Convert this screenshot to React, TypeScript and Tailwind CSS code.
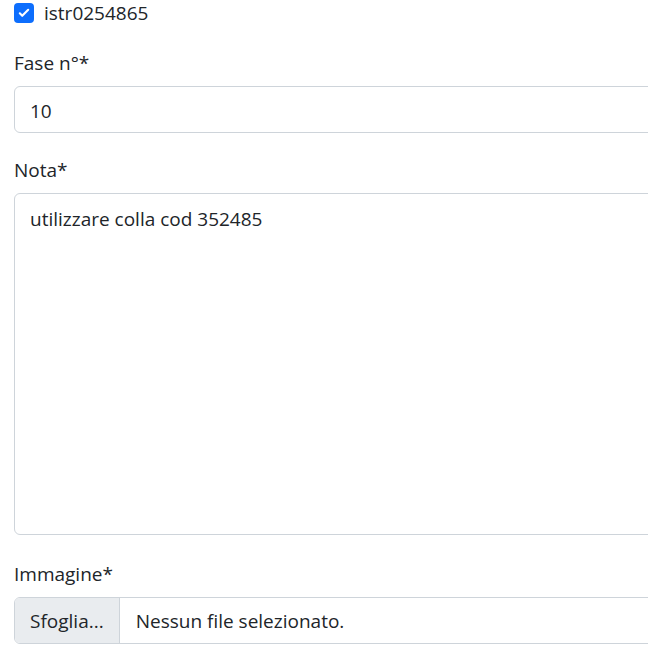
export default function App() {
  return (
    <div className="w-[648px] h-[661px] overflow-hidden bg-white text-[#212529] text-[19px] leading-[30px] font-['Segoe_UI','Open_Sans',sans-serif]">
      <div className="w-[760px] pl-[14px]">
        <div className="flex items-center h-[26px]">
          <span className="w-[20px] h-[20px] rounded-[4px] bg-[#0d6efd] flex items-center justify-center">
            <svg viewBox="0 0 20 20" className="w-[14px] h-[14px]">
              <path d="M4 10.5l3.5 3.5L16 5.5" fill="none" stroke="#fff" strokeWidth="3" strokeLinecap="round" strokeLinejoin="round" />
            </svg>
          </span>
          <span className="ml-[10px]">istr0254865</span>
        </div>

        <label className="block mt-[22px] mb-[8px]">Fase n°*</label>
        <div className="h-[47px] border border-[#ced4da] rounded-[6px] px-[15px] py-[9px]">10</div>

        <label className="block mt-[22px] mb-[8px]">Nota*</label>
        <div className="h-[342px] border border-[#ced4da] rounded-[6px] px-[15px] py-[10px]">utilizzare colla cod 352485</div>

        <label className="block mt-[24px] mb-[8px]">Immagine*</label>
        <div className="h-[47px] border border-[#ced4da] rounded-[6px] flex overflow-hidden">
          <span className="bg-[#e9ecef] border-r border-[#ced4da] px-[15px] flex items-center">Sfoglia...</span>
          <span className="pl-[16px] flex items-center">Nessun file selezionato.</span>
        </div>
      </div>
    </div>
  );
}
